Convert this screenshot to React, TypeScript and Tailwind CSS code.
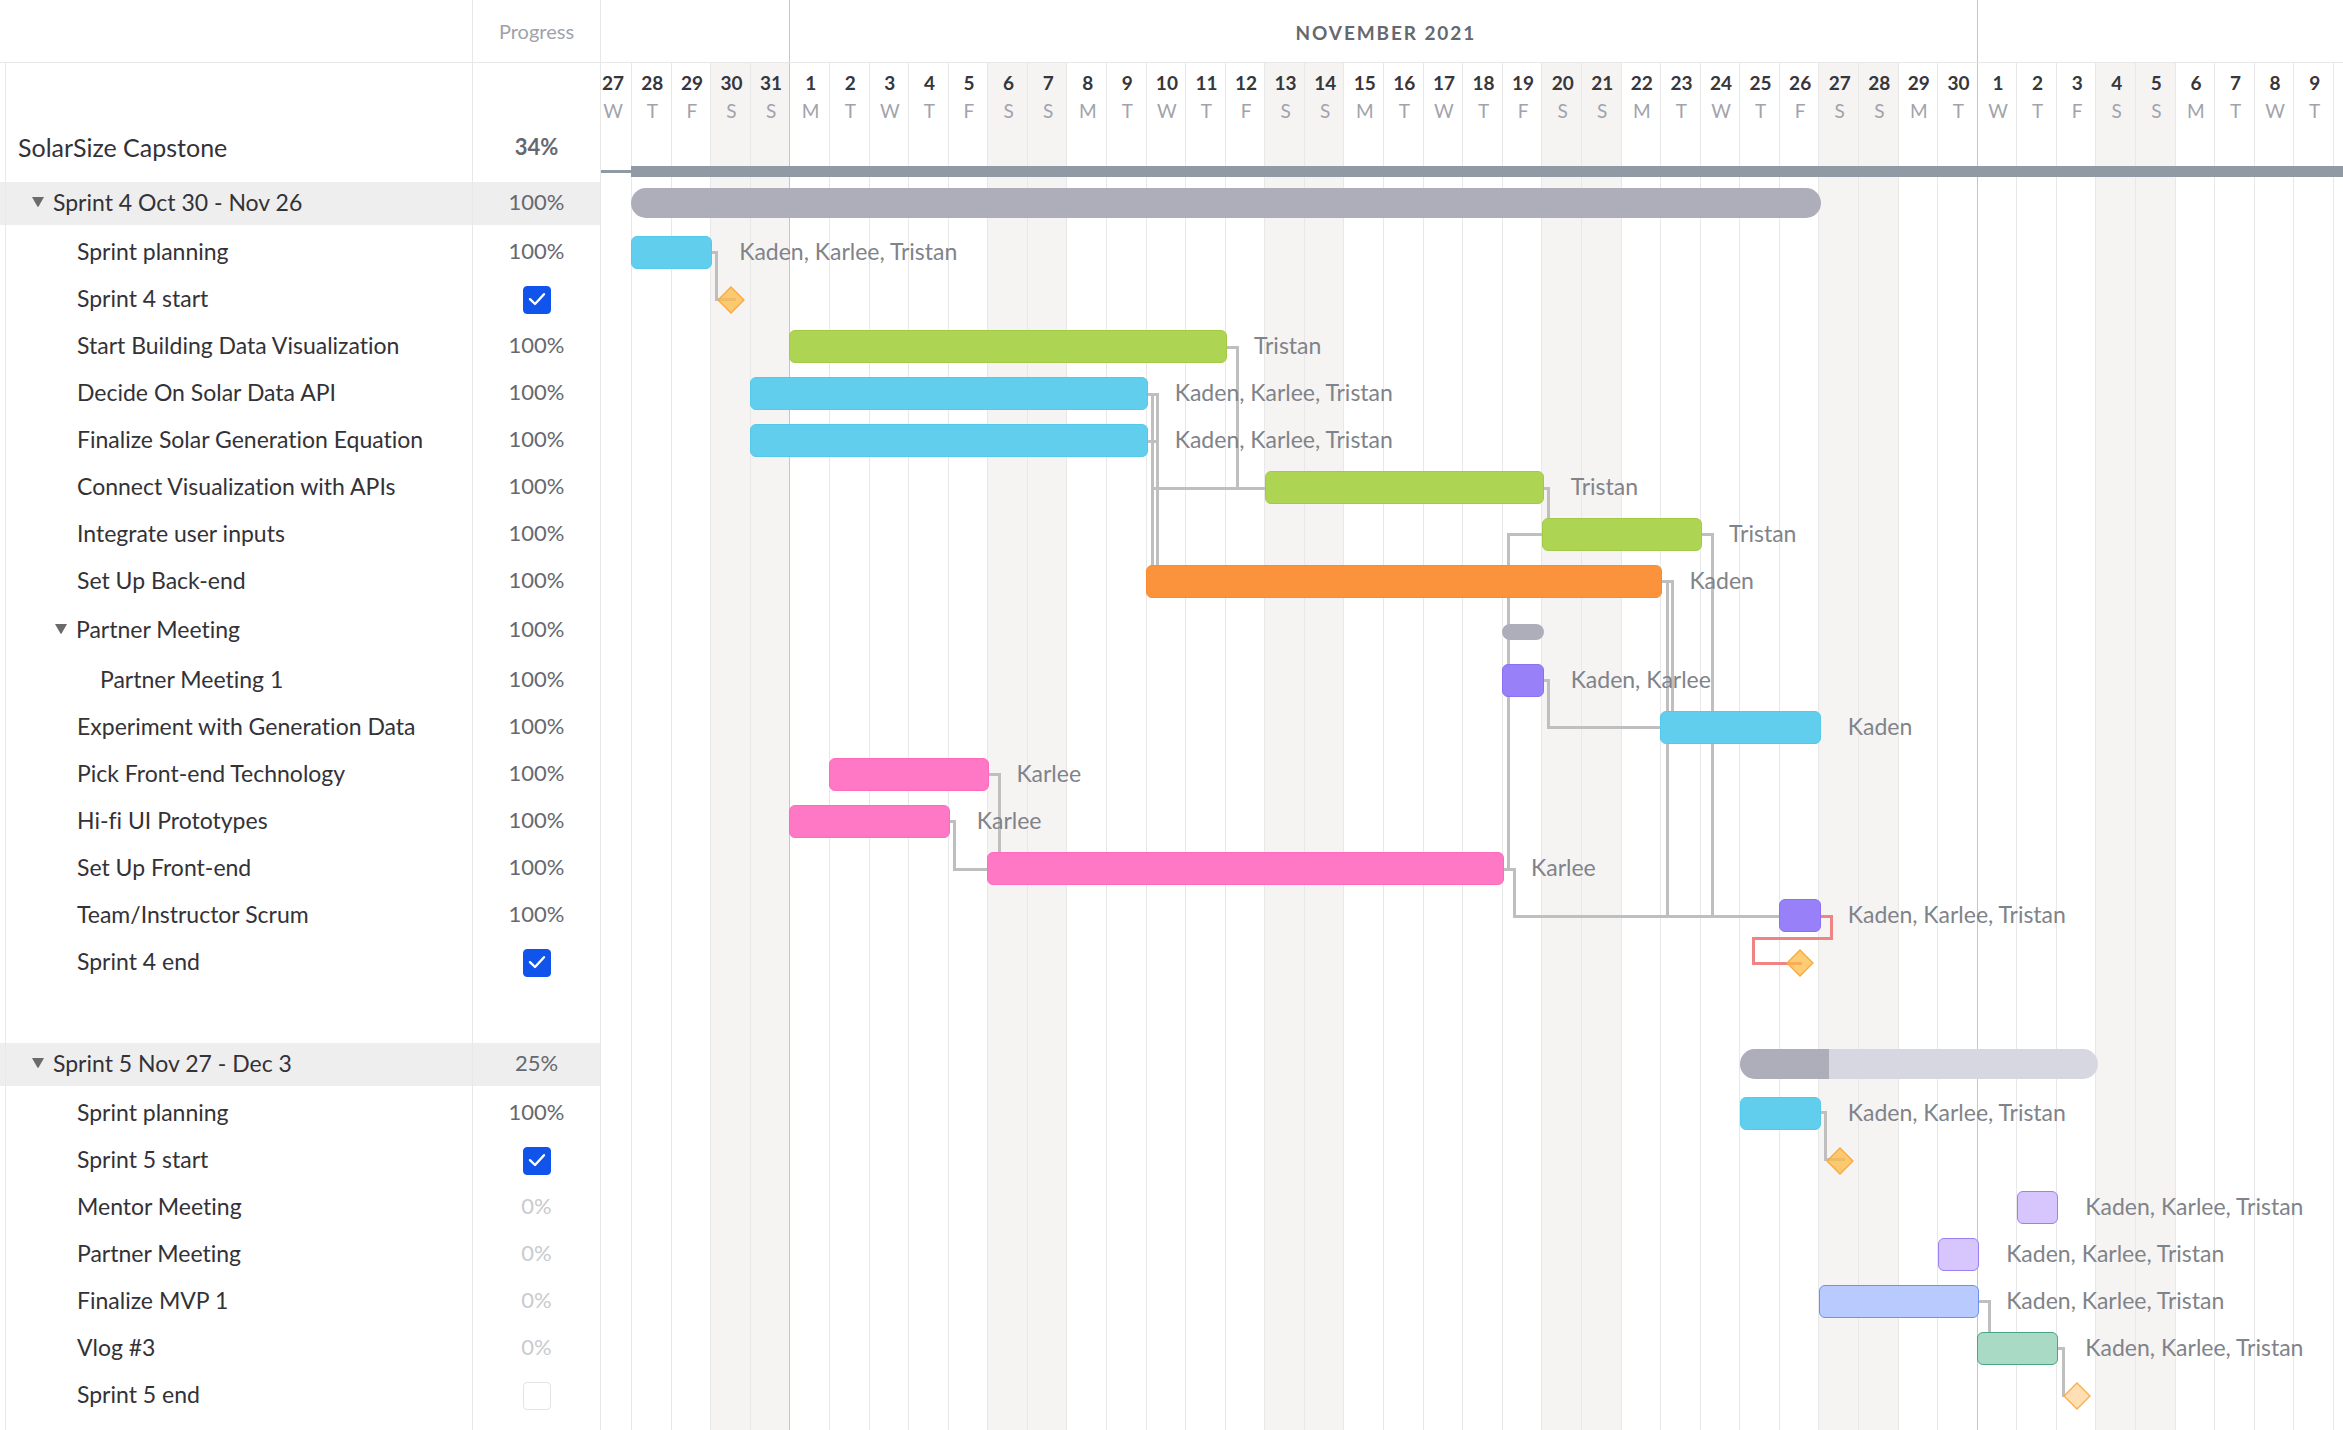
import React from "react";

type Kind = "task" | "milestone" | "group" | "subgroup" | "project" | "spacer";

type Row = {
  name: string;
  kind: Kind;
  indent?: string;
  progress?: number;
  from?: number;
  to?: number;
  color?: string;
  who?: string;
};

const ALL = "Kaden, Karlee, Tristan";

const BLUE = "bg-[#62ceee] border-[#55c9ea]";
const GREEN = "bg-[#add553] border-[#a2ca47]";
const ORANGE = "bg-[#fb933d] border-[#f98c32]";
const PINK = "bg-[#ff78c6] border-[#ff69be]";
const PURPLE = "bg-[#9880f8] border-[#8b70f5]";
const LAVENDER = "bg-[#d7c5fe] border-[#9a80f0]";
const PERIWINKLE = "bg-[#b9caff] border-[#6f8ff2]";
const MINT = "bg-[#a8dac5] border-[#4aa583]";

/* Days are counted from Oct 28, the first full column. */
const ROWS: Row[] = [
  { name: "SolarSize Capstone", kind: "project", indent: "pl-3", progress: 34 },
  { name: "Sprint 4 Oct 30 - Nov 26", kind: "group", indent: "pl-[26px]", progress: 100, from: 0, to: 30 },
  { name: "Sprint planning", kind: "task", progress: 100, from: 0, to: 2, color: BLUE, who: ALL },
  { name: "Sprint 4 start", kind: "milestone", progress: 100, from: 2 },
  { name: "Start Building Data Visualization", kind: "task", progress: 100, from: 4, to: 15, color: GREEN, who: "Tristan" },
  { name: "Decide On Solar Data API", kind: "task", progress: 100, from: 3, to: 13, color: BLUE, who: ALL },
  { name: "Finalize Solar Generation Equation", kind: "task", progress: 100, from: 3, to: 13, color: BLUE, who: ALL },
  { name: "Connect Visualization with APIs", kind: "task", progress: 100, from: 16, to: 23, color: GREEN, who: "Tristan" },
  { name: "Integrate user inputs", kind: "task", progress: 100, from: 23, to: 27, color: GREEN, who: "Tristan" },
  { name: "Set Up Back-end", kind: "task", progress: 100, from: 13, to: 26, color: ORANGE, who: "Kaden" },
  { name: "Partner Meeting", kind: "subgroup", indent: "pl-[49px]", progress: 100, from: 22, to: 23 },
  { name: "Partner Meeting 1", kind: "task", indent: "pl-[94px]", progress: 100, from: 22, to: 23, color: PURPLE, who: "Kaden, Karlee" },
  { name: "Experiment with Generation Data", kind: "task", progress: 100, from: 26, to: 30, color: BLUE, who: "Kaden" },
  { name: "Pick Front-end Technology", kind: "task", progress: 100, from: 5, to: 9, color: PINK, who: "Karlee" },
  { name: "Hi-fi UI Prototypes", kind: "task", progress: 100, from: 4, to: 8, color: PINK, who: "Karlee" },
  { name: "Set Up Front-end", kind: "task", progress: 100, from: 9, to: 22, color: PINK, who: "Karlee" },
  { name: "Team/Instructor Scrum", kind: "task", progress: 100, from: 29, to: 30, color: PURPLE, who: ALL },
  { name: "Sprint 4 end", kind: "milestone", progress: 100, from: 29 },
  { name: "", kind: "spacer" },
  { name: "Sprint 5 Nov 27 - Dec 3", kind: "group", indent: "pl-[26px]", progress: 25, from: 28, to: 37 },
  { name: "Sprint planning", kind: "task", progress: 100, from: 28, to: 30, color: BLUE, who: ALL },
  { name: "Sprint 5 start", kind: "milestone", progress: 100, from: 30 },
  { name: "Mentor Meeting", kind: "task", progress: 0, from: 35, to: 36, color: LAVENDER, who: ALL },
  { name: "Partner Meeting", kind: "task", progress: 0, from: 33, to: 34, color: LAVENDER, who: ALL },
  { name: "Finalize MVP 1", kind: "task", progress: 0, from: 30, to: 34, color: PERIWINKLE, who: ALL },
  { name: "Vlog #3", kind: "task", progress: 0, from: 34, to: 36, color: MINT, who: ALL },
  { name: "Sprint 5 end", kind: "milestone", progress: 0, from: 36 },
];

const SPAN = 44;
const LEAD = 0.76;
const at = (day: number) => `${((day + LEAD) / SPAN) * 100}%`;
const wide = (days: number) => `${(days / SPAN) * 100}%`;

function heightOf(row: Row, previous?: Row) {
  if (row.kind === "project") return "h-[119px]";
  if (row.kind === "group") return "h-[43px]";
  if (row.kind === "subgroup") return "h-[52px]";
  if (row.kind === "spacer") return "h-[57px]";
  return previous?.kind === "group" ? "h-[51px]" : "h-[47px]";
}

/* Dependency lines: [day, y] corners, y measured from the top of the day grid. */
const LINKS: { points: [number, number][]; late?: boolean }[] = [
  { points: [[2, 189], [2.15, 189], [2.15, 236], [2.6, 236]] },
  { points: [[15, 284], [15.32, 284], [15.32, 425]] },
  { points: [[13, 331], [13.3, 331], [13.3, 510]] },
  { points: [[13, 378], [13.3, 378]] },
  { points: [[13, 331], [13.18, 331], [13.18, 510]] },
  { points: [[13.18, 425], [16, 425]] },
  { points: [[23, 425], [23.17, 425], [23.17, 460]] },
  { points: [[23, 471], [22.17, 471], [22.17, 806]] },
  { points: [[27, 471], [27.32, 471], [27.32, 853]] },
  { points: [[26, 518], [26.18, 518], [26.18, 853]] },
  { points: [[26, 518], [26.3, 518], [26.3, 655]] },
  { points: [[23, 617], [23.17, 617], [23.17, 664], [26, 664]] },
  { points: [[9, 711], [9.3, 711], [9.3, 800]] },
  { points: [[8, 758], [8.17, 758], [8.17, 806], [9, 806]] },
  { points: [[22, 806], [22.32, 806], [22.32, 853], [29, 853]] },
  { points: [[30, 853], [30.32, 853], [30.32, 875], [28.35, 875], [28.35, 900], [29.54, 900]], late: true },
  { points: [[30, 1049], [30.17, 1049], [30.17, 1096], [30.63, 1096]] },
  { points: [[34, 1238], [34.3, 1238], [34.3, 1280]] },
  { points: [[36, 1285], [36.17, 1285], [36.17, 1332]] },
];

function Links() {
  return (
    <svg className="col-start-1 row-start-1 h-full w-full" shapeRendering="crispEdges" aria-hidden="true">
      {LINKS.flatMap((link, n) =>
        link.points.slice(1).map(([day, y], i) => {
          const [fromDay, fromY] = link.points[i];
          return (
            <line
              key={`${n}-${i}`}
              x1={at(fromDay)}
              y1={fromY + 0.5}
              x2={at(day)}
              y2={y + 0.5}
              strokeWidth="3"
              strokeLinecap="square"
              className={link.late ? "stroke-[#ef8484]" : "stroke-[#bfbfbf]"}
            />
          );
        })
      )}
    </svg>
  );
}

function Toggle({ label }: { label: string }) {
  return (
    <button type="button" aria-label={`Collapse ${label}`} aria-expanded="true" className="flex w-[21px] items-center">
      <svg viewBox="0 0 12 10" className="h-[10px] w-3 fill-[#6b6b6b]">
        <path d="M0 0H12L6.6 9.4Q6 10 5.4 9.4Z" />
      </svg>
    </button>
  );
}

function Tick({ checked, label }: { checked: boolean; label: string }) {
  return (
    <span className="inline-grid size-7 align-middle">
      <input
        type="checkbox"
        defaultChecked={checked}
        aria-label={`${label} complete`}
        className="peer col-start-1 row-start-1 size-7 appearance-none rounded border border-[#e3e3e5] bg-white checked:border-[#1054eb] checked:bg-[#1054eb]"
      />
      <svg
        viewBox="0 0 28 28"
        fill="none"
        className="pointer-events-none col-start-1 row-start-1 size-7 stroke-white opacity-0 peer-checked:opacity-100"
      >
        <path d="M7 13.2L12 18L21 8.2" strokeWidth="2.4" strokeLinecap="round" strokeLinejoin="round" />
      </svg>
    </span>
  );
}

function Progress({ row }: { row: Row }) {
  if (row.kind === "spacer") return null;
  if (row.kind === "milestone") return <Tick checked={row.progress === 100} label={row.name} />;
  if (row.kind === "project") return <span className="font-bold text-[#66686f]">{row.progress}%</span>;
  return <span className={row.progress ? "text-[#66686f]" : "text-[#c9cbce]"}>{row.progress}%</span>;
}

function TaskTable() {
  return (
    <table className="w-[601px] shrink-0 table-fixed border-separate border-spacing-0 text-[23px] leading-6 text-[#333237]">
      <colgroup>
        <col className="w-[6px]" />
        <col />
        <col className="w-32" />
      </colgroup>
      <thead>
        <tr className="h-[63px]">
          <th colSpan={2} aria-label="Task" className="border-r border-b border-[#e8e8e8] p-0" />
          <th scope="col" className="border-r border-b border-[#e8e8e8] p-0 text-xl font-normal text-[#9fa2ab]">
            Progress
          </th>
        </tr>
      </thead>
      <tbody>
        {ROWS.map((row, i) => {
          const previous = ROWS[i - 1];
          const isGroup = row.kind === "group";
          const isProject = row.kind === "project";
          const fill = isGroup ? "bg-[#eeeeee]" : "";
          const pad = isProject ? "pt-12" : previous?.kind === "group" ? "pt-0" : "pb-1";
          return (
            <tr key={i} className={heightOf(row, previous)}>
              <td className={`border-r border-[#e8e8e8] p-0 ${fill}`} />
              <th
                scope="row"
                className={`border-r border-[#e8e8e8] py-0 pr-0 text-left font-normal ${fill} ${row.indent ?? "pl-[71px]"}`}
              >
                <div className={`flex items-center ${pad} ${isProject ? "text-[25px]" : ""}`}>
                  {(isGroup || row.kind === "subgroup") && <Toggle label={row.name} />}
                  {row.name}
                </div>
              </th>
              <td className={`border-r border-[#e8e8e8] p-0 text-center text-[22px] ${fill}`}>
                <div className={row.kind === "milestone" ? "" : pad}>
                  <Progress row={row} />
                </div>
              </td>
            </tr>
          );
        })}
        <tr className="h-[11px]">
          <td className="border-r border-[#e8e8e8] p-0" />
          <td className="border-r border-[#e8e8e8] p-0" />
          <td className="border-r border-[#e8e8e8] p-0" />
        </tr>
      </tbody>
    </table>
  );
}

const WEEKDAYS = ["T", "F", "S", "S", "M", "T", "W"];

function dateOf(day: number) {
  if (day < 4) return 28 + day;
  return day < 34 ? day - 3 : day - 33;
}

function DayGrid() {
  return (
    <div className="col-start-1 row-start-1 flex overflow-hidden text-center text-[19px] leading-7">
      <div className="flex shrink-0 justify-end overflow-hidden" style={{ width: at(0) }}>
        <div className="w-9 shrink-0 pt-[6px]">
          <div className="font-bold text-[#36363c]">27</div>
          <div className="text-[#a0a3ab]">W</div>
        </div>
      </div>
      {Array.from({ length: 43 }, (_, day) => {
        const weekend = day % 7 === 2 || day % 7 === 3;
        const line = day === 4 || day === 34 ? "border-[#c6c6c8]" : "border-[#e8e8e8]";
        return (
          <div
            key={day}
            className={`shrink-0 border-l pt-[6px] pl-[2px] ${line} ${weekend ? "bg-[#f5f4f3]" : ""}`}
            style={{ width: wide(1) }}
          >
            <div className="font-bold text-[#36363c]">{dateOf(day)}</div>
            <div className="text-[#a0a3ab]">{WEEKDAYS[day % 7]}</div>
          </div>
        );
      })}
      <div className="grow border-l border-[#e8e8e8]" />
    </div>
  );
}

function Bar({ row }: { row: Row }) {
  const { from = 0, to = 0 } = row;
  const box = { left: at(from), width: `calc(${wide(to - from)} + 2px)` };

  if (row.kind === "project") {
    return (
      <div className="absolute inset-x-0 bottom-[5px] flex items-center">
        <div className="h-[3px] bg-[#8f9aa4]" style={{ width: at(0) }} />
        <div className="h-[11px] grow bg-[#8f9aa4]" />
      </div>
    );
  }
  if (row.kind === "group") {
    return (
      <div className="absolute top-[6px] h-[30px] overflow-hidden rounded-full bg-[#d7d7e1]" style={box}>
        <div className="h-full bg-[#aeaebb]" style={{ width: `${row.progress}%` }} />
      </div>
    );
  }
  if (row.kind === "subgroup") {
    return <div className="absolute top-[19px] h-4 rounded-full bg-[#aeaebb]" style={box} />;
  }
  if (row.kind === "milestone") {
    const done = row.progress === 100;
    return (
      <div className="absolute inset-y-0 flex items-center justify-center pl-[2px]" style={{ left: at(from), width: wide(1) }}>
        <svg viewBox="0 0 28 28" className="size-7 shrink-0">
          <path
            d="M14 1L27 14L14 27L1 14Z"
            strokeWidth="1.3"
            className={done ? "fill-[#fdbb45]/75 stroke-[#f9a93b]" : "fill-[#ffdfb3] stroke-[#f9ad4a]"}
          />
        </svg>
      </div>
    );
  }
  if (row.kind === "task") {
    return (
      <div className="absolute bottom-0 flex h-[47px] items-center" style={box}>
        <div className={`h-[33px] w-full shrink-0 rounded-md border ${row.color}`} />
        <span className="pb-1 pl-[27px] whitespace-nowrap">{row.who}</span>
      </div>
    );
  }
  return null;
}

function Timeline() {
  return (
    <div className="flex min-w-0 grow flex-col overflow-hidden">
      <div className="flex h-[63px] shrink-0 border-b border-[#e8e8e8]">
        <div className="shrink-0" style={{ width: at(4) }} />
        <div
          className="flex shrink-0 items-center justify-center border-l border-[#c6c6c8] pt-1 pl-1 text-[19px] font-bold tracking-widest whitespace-nowrap text-[#66686f]"
          style={{ width: wide(30) }}
        >
          NOVEMBER 2021
        </div>
        <div className="grow border-l border-[#c6c6c8]" />
      </div>
      <div className="grid grow grid-cols-1">
        <DayGrid />
        <Links />
        <div className="col-start-1 row-start-1 text-[23px] leading-6 text-[#808389]">
          {ROWS.map((row, i) => (
            <div key={i} className={`relative ${heightOf(row, ROWS[i - 1])}`}>
              <Bar row={row} />
            </div>
          ))}
        </div>
      </div>
    </div>
  );
}

export default function App() {
  return (
    <main className="flex min-h-screen bg-white font-['Lato',sans-serif] [font-variant-ligatures:none]">
      <TaskTable />
      <Timeline />
    </main>
  );
}
